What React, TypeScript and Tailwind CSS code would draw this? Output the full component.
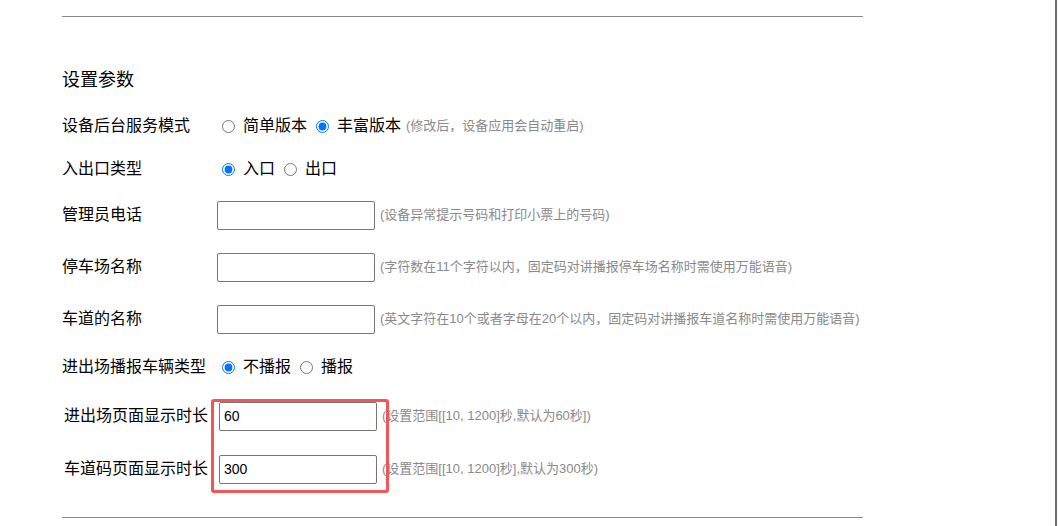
import React from "react";

type RadioOpt = { label: string; checked?: boolean };

const font = { fontFamily: '"Liberation Sans", "Noto Sans CJK SC", sans-serif' };

function RadioRow({ label, name, options, hint, h }: { label: string; name: string; options: RadioOpt[]; hint?: string; h: string }) {
  return (
    <div className={`flex items-center ${h}`}>
      <div className="w-[155px] shrink-0 text-[16px] text-black">{label}</div>
      {options.map((o) => (
        <label key={o.label} className="flex items-center text-[16px] text-black">
          <input
            type="radio"
            name={name}
            defaultChecked={o.checked}
            className="ml-[5px] mr-[8px] h-[13px] w-[13px] accent-[#0075ff]"
          />
          <span className="mr-[4px]">{o.label}</span>
        </label>
      ))}
      {hint && <span className="ml-[1px] text-[13px] text-[#8a8a8a]">{hint}</span>}
    </div>
  );
}

function InputRow({ label, value, hint, h, indent }: { label: string; value?: string; hint: string; h: string; indent?: boolean }) {
  return (
    <div className={`flex items-center ${h}`}>
      <div className={`shrink-0 text-[16px] text-black ${indent ? "w-[157px] pl-[2px]" : "w-[155px]"}`}>{label}</div>
      <input
        type="text"
        defaultValue={value}
        className="h-[29px] w-[158px] rounded-[2px] border border-[#767676] bg-white px-[4px] text-[14px] text-black outline-none"
        style={font}
      />
      <span className="ml-[5px] text-[13px] text-[#8a8a8a]">{hint}</span>
    </div>
  );
}

export default function App() {
  return (
    <div className="relative flex h-[526px] w-[1058px] overflow-hidden bg-white" style={font}>
      <div className="flex-1 pl-[62px]">
        <div className="w-[801px]">
          <div className="mt-4 border-t border-[#8a8a8a]" />
          <div className="mt-[39px] flex h-[48px] items-center text-[18px] text-black">设置参数</div>

          <RadioRow
            h="h-[44px]"
            label="设备后台服务模式"
            name="mode"
            options={[{ label: "简单版本" }, { label: "丰富版本", checked: true }]}
            hint="(修改后，设备应用会自动重启)"
          />
          <RadioRow
            h="h-[42px]"
            label="入出口类型"
            name="gate"
            options={[{ label: "入口", checked: true }, { label: "出口" }]}
          />

          <InputRow h="h-[50px]" label="管理员电话" hint="(设备异常提示号码和打印小票上的号码)" />
          <InputRow h="h-[54px]" label="停车场名称" hint="(字符数在11个字符以内，固定码对讲播报停车场名称时需使用万能语音)" />
          <InputRow h="h-[50px]" label="车道的名称" hint="(英文字符在10个或者字母在20个以内，固定码对讲播报车道名称时需使用万能语音)" />

          <RadioRow
            h="h-[46px]"
            label="进出场播报车辆类型"
            name="voice"
            options={[{ label: "不播报", checked: true }, { label: "播报" }]}
          />

          <InputRow h="h-[52px]" indent label="进出场页面显示时长" value="60" hint="(设置范围[[10, 1200]秒,默认为60秒])" />
          <InputRow h="h-[54px]" indent label="车道码页面显示时长" value="300" hint="(设置范围[[10, 1200]秒],默认为300秒)" />

          <div className="mt-[21px] border-t border-[#8a8a8a]" />
        </div>
      </div>
      <div className="mr-[1px] w-[2px] bg-[#6b6b6b]" />

      {/* annotation box */}
      <div className="pointer-events-none absolute left-[211px] top-[399px] h-[94px] w-[178px] rounded-[3px] border-[3px] border-[#f45557]" />
    </div>
  );
}
